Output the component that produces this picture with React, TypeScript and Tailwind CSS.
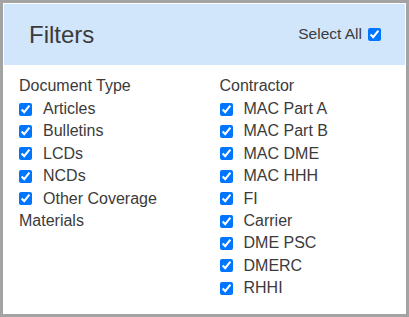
const documentTypes = ["Articles", "Bulletins", "LCDs", "NCDs", "Other Coverage"];
const contractors = [
  "MAC Part A",
  "MAC Part B",
  "MAC DME",
  "MAC HHH",
  "FI",
  "Carrier",
  "DME PSC",
  "DMERC",
  "RHHI",
];

function CheckRow({ label }: { label: string }) {
  return (
    <label className="flex h-[22.4px] items-center gap-[11px]">
      <input type="checkbox" defaultChecked className="m-0 h-[13px] w-[13px]" />
      <span>{label}</span>
    </label>
  );
}

export default function App() {
  return (
    <div
      className="box-border h-[317px] w-[409px] border-[3px] border-[#a3a3a3] bg-white p-px text-[16px] leading-[22.4px] text-[#3b3b3b]"
      style={{ fontFamily: '"Liberation Sans", Arial, sans-serif' }}
    >
      <div className="flex h-[61px] items-center justify-between bg-[#d1e6fa] pl-[25px] pr-[24px]">
        <h2 className="text-[24px] leading-none">Filters</h2>
        <label className="flex items-center gap-[6px] text-[15.5px]">
          <span>Select All</span>
          <input type="checkbox" defaultChecked className="m-0 h-[13px] w-[13px]" />
        </label>
      </div>

      <div className="grid grid-cols-2 pt-[10px]">
        <div className="px-[15px]">
          <div className="h-[23px]">Document Type</div>
          {documentTypes.map((item) => (
            <CheckRow key={item} label={item} />
          ))}
          <div>Materials</div>
        </div>
        <div className="px-[15px]">
          <div className="h-[23px]">Contractor</div>
          {contractors.map((item) => (
            <CheckRow key={item} label={item} />
          ))}
        </div>
      </div>
    </div>
  );
}
